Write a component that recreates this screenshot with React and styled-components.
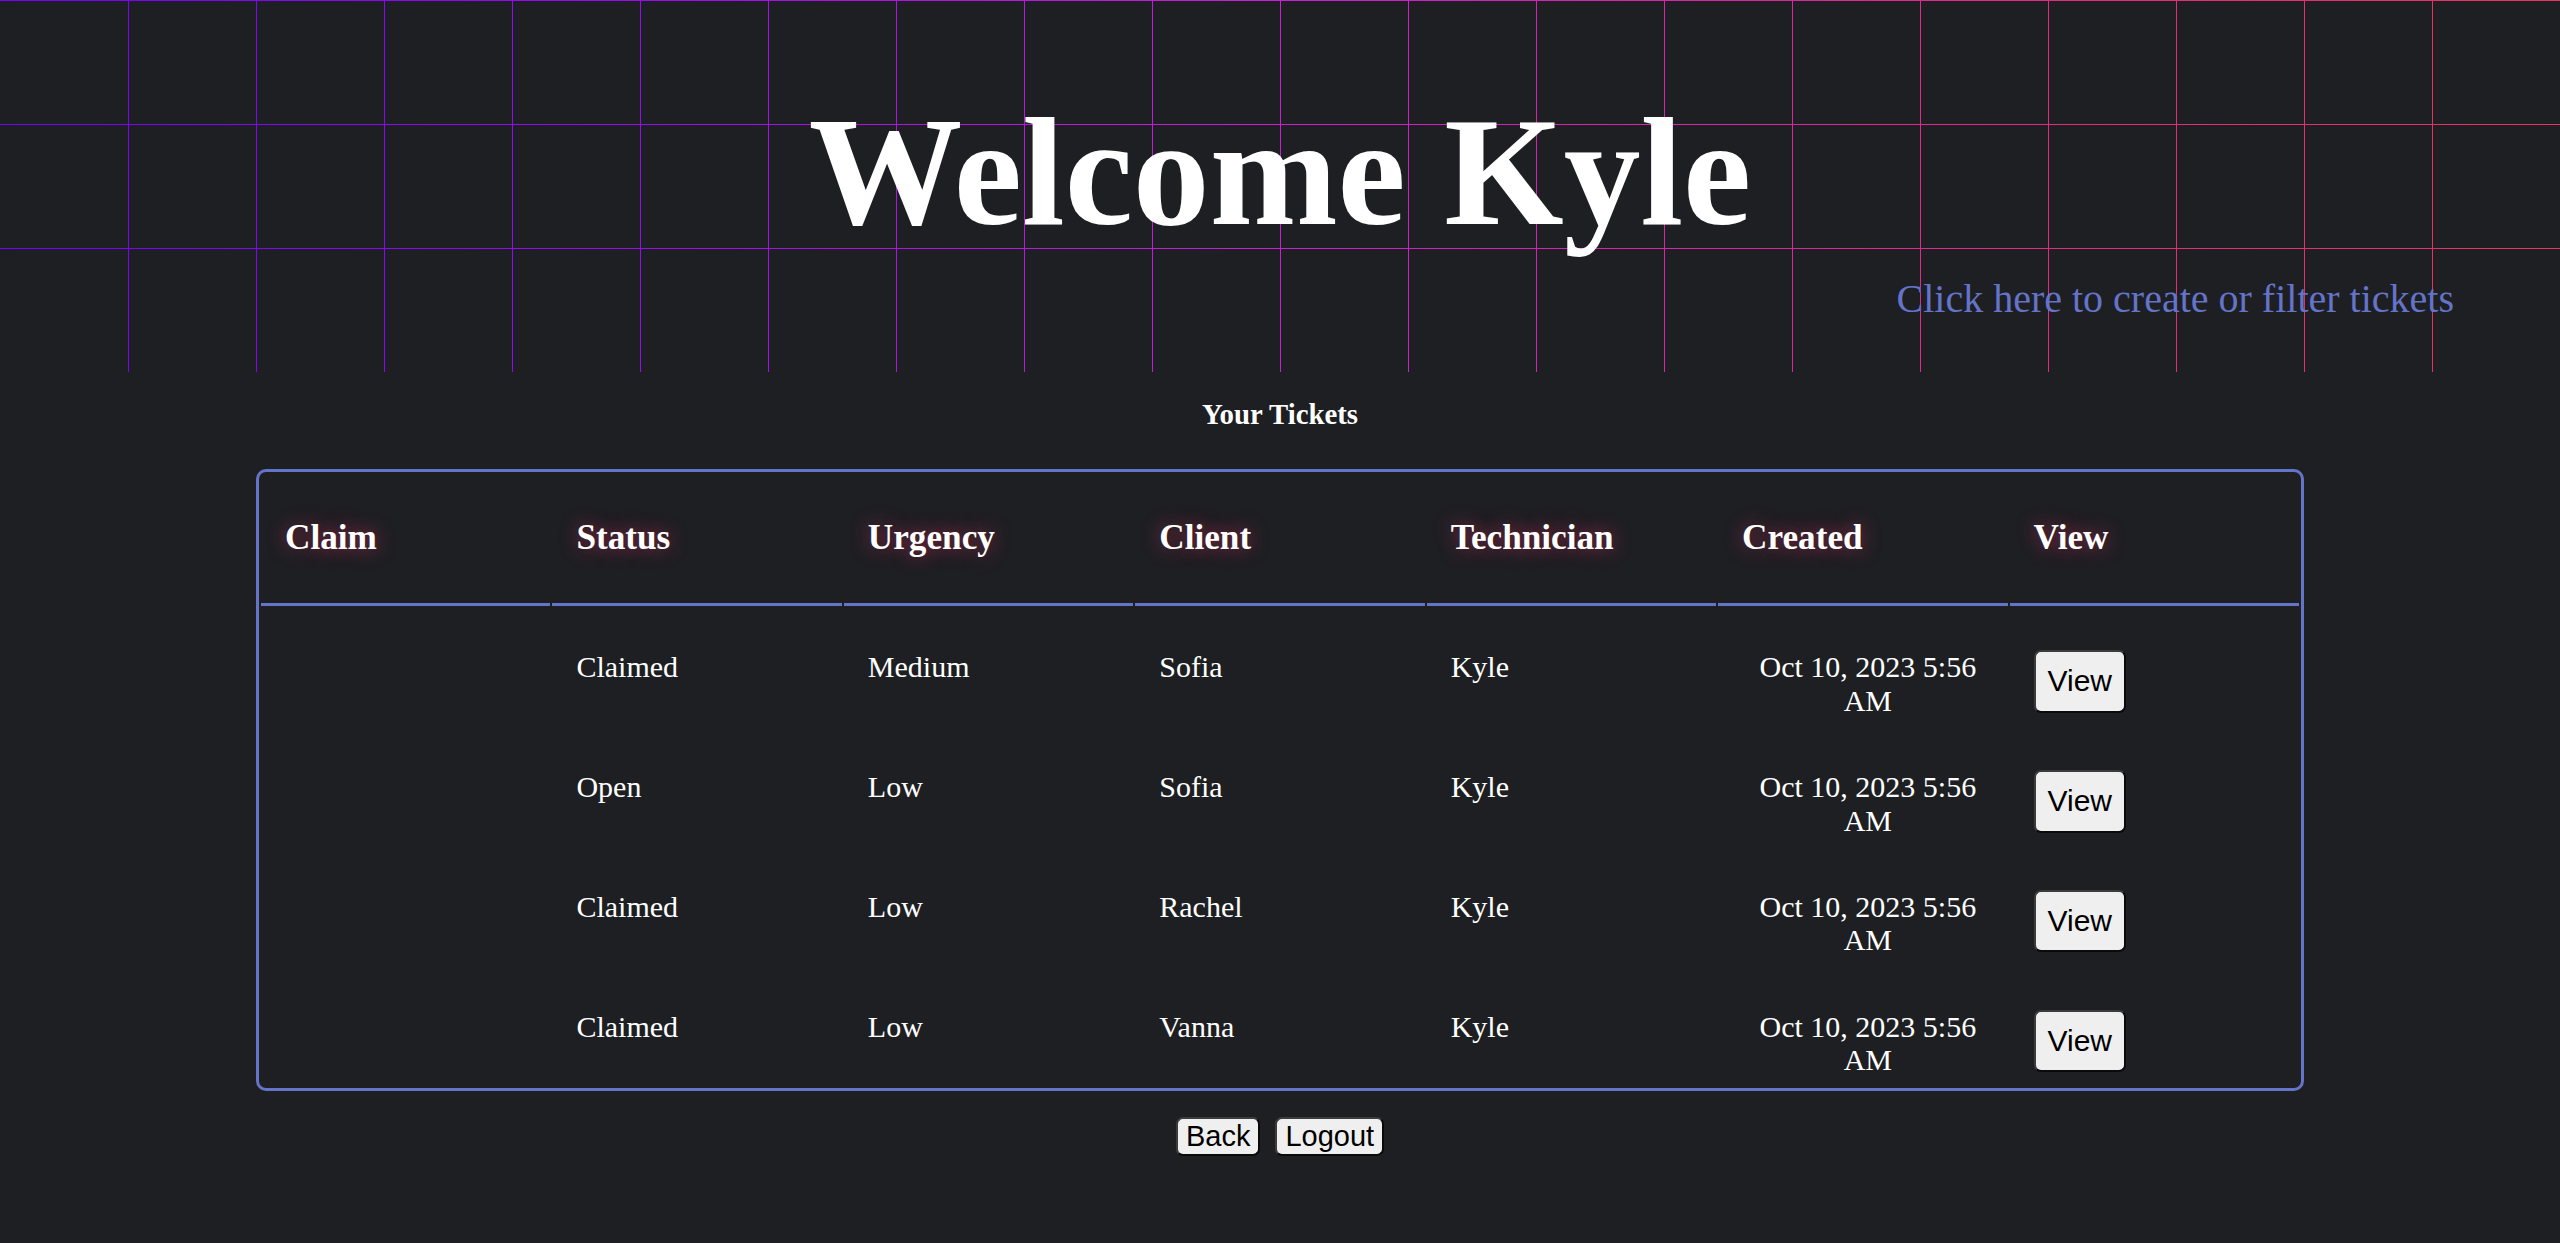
import styled, { createGlobalStyle } from "styled-components";

const GlobalStyle = createGlobalStyle`
    html, body {
        margin: 0;
        padding: 0;
        background-color: #1e1f23;
        color: #ffffff;
        font-family: "Liberation Serif", "Times New Roman", serif;
    }
`;

const tickets = [
    { status: "Claimed", urgency: "Medium", client: "Sofia", tech: "Kyle", created: "Oct 10, 2023 5:56 AM" },
    { status: "Open", urgency: "Low", client: "Sofia", tech: "Kyle", created: "Oct 10, 2023 5:56 AM" },
    { status: "Claimed", urgency: "Low", client: "Rachel", tech: "Kyle", created: "Oct 10, 2023 5:56 AM" },
    { status: "Claimed", urgency: "Low", client: "Vanna", tech: "Kyle", created: "Oct 10, 2023 5:56 AM" },
];

const columns = ["Claim", "Status", "Urgency", "Client", "Technician", "Created", "View"];

export default function App() {
    return (
        <>
            <GlobalStyle />
            <SHero>
                <STitle>Welcome Kyle</STitle>
                <SLink href="#tickets">Click here to create or filter tickets</SLink>
            </SHero>
            <SSubTitle>Your Tickets</SSubTitle>
            <STable>
                <thead>
                    <tr>
                        {columns.map((c) => (
                            <STh key={c}>{c}</STh>
                        ))}
                    </tr>
                </thead>
                <tbody>
                    {tickets.map((t, i) => (
                        <tr key={i}>
                            <STd></STd>
                            <STd>{t.status}</STd>
                            <STd>{t.urgency}</STd>
                            <STd>{t.client}</STd>
                            <STd>{t.tech}</STd>
                            <STd $center>{t.created}</STd>
                            <STd>
                                <SButton $big>View</SButton>
                            </STd>
                        </tr>
                    ))}
                </tbody>
            </STable>
            <SActions>
                <SButton>Back</SButton>
                <SButton>Logout</SButton>
            </SActions>
        </>
    );
}

const gridColors = "linear-gradient(90deg, #7400ff 0%, #9a0cf0 25%, #c81ed8 48%, #d824b0 62%, #e22c84 80%, #e8345e 100%)";

const SHero = styled.header`
    position: relative;
    isolation: isolate;
    height: 372px;
    display: flex;
    flex-direction: column;
    /* horizontal grid lines */
    &::before {
        content: "";
        position: absolute;
        inset: 0;
        z-index: -1;
        background: ${gridColors};
        -webkit-mask-image: linear-gradient(to bottom, #000 1px, transparent 1px);
        mask-image: linear-gradient(to bottom, #000 1px, transparent 1px);
        -webkit-mask-size: 100% 124px;
        mask-size: 100% 124px;
    }
    /* vertical grid lines, first one at 128px */
    &::after {
        content: "";
        position: absolute;
        top: 0;
        bottom: 0;
        left: 128px;
        right: 0;
        z-index: -1;
        background: ${gridColors};
        background-size: calc(100% + 128px) 100%;
        background-position: -128px 0;
        -webkit-mask-image: linear-gradient(to right, #000 1px, transparent 1px);
        mask-image: linear-gradient(to right, #000 1px, transparent 1px);
        -webkit-mask-size: 128px 100%;
        mask-size: 128px 100%;
    }
`;

const STitle = styled.h1`
    margin: 96px 0 0;
    font-size: 153.6px;
    line-height: 1;
    font-weight: bold;
    text-align: center;
    color: #ffffff;
`;

const SLink = styled.a`
    align-self: flex-end;
    margin: 29px 106px 0 0;
    font-size: 40px;
    line-height: 1;
    color: #6474c8;
    text-decoration: none;
    cursor: pointer;
`;

const SSubTitle = styled.h2`
    margin: 28px 0 40.5px;
    font-size: 28.8px;
    line-height: 1;
    font-weight: bold;
    text-align: center;
`;

const STable = styled.table`
    width: 2048px;
    margin: 0 auto;
    table-layout: fixed;
    border: 3px solid #6474c8;
    border-radius: 10px;
    border-spacing: 2px;
`;

const STh = styled.th`
    padding: 44px 14px 45px 24px;
    font-size: 35.2px;
    line-height: 40px;
    font-weight: bold;
    text-align: left;
    color: #ffffff;
    border-bottom: 3px solid #6474c8;
    text-shadow: 0 0 18px rgba(235, 50, 105, 0.6);
`;

const STd = styled.td`
    padding: 42px 14px 9px 24px;
    font-size: 30px;
    line-height: 33.4px;
    vertical-align: top;
    color: #ffffff;
    text-align: ${(p) => (p.$center ? "center" : "left")};
`;

const SActions = styled.div`
    display: flex;
    justify-content: center;
    gap: 15px;
    margin-top: 26.5px;
`;

const SButton = styled.button`
    display: block;
    margin: 0;
    font-family: "Liberation Sans", Arial, sans-serif;
    font-size: ${(p) => (p.$big ? "30px" : "29px")};
    line-height: 1.15;
    padding: ${(p) => (p.$big ? "12px 12px" : "1px 8px")};
    color: #000000;
    background-color: #efefef;
    border: 2px solid;
    border-color: #3c3c3c #0a0a0a #0a0a0a #3c3c3c;
    border-radius: 7px;
    cursor: pointer;
`;
